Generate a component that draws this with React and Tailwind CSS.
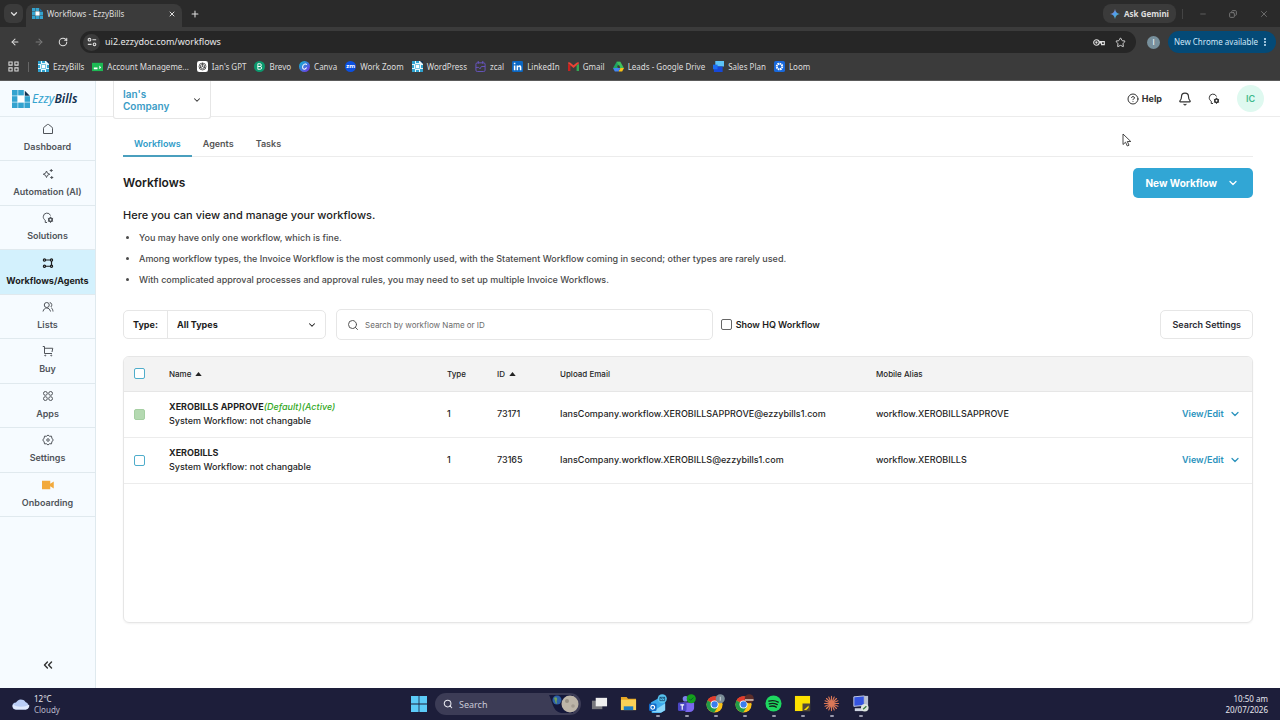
import { useState } from "react";
import {
  ArrowLeft,
  ArrowRight,
  RotateCw,
  ChevronDown,
  ChevronsLeft,
  X,
  Plus,
  Minus,
  Copy,
  Star,
  Search,
  Bell,
  CircleHelp,
  EllipsisVertical,
} from "lucide-react";

/* ---------- LOGOS ---------- */

function EzzyMark({ className, corner = "#12304f" }) {
  const cells = [];
  for (let y = 0; y < 3; y++) {
    for (let x = 0; x < 3; x++) {
      const center = x === 1 && y === 1;
      if (!center && !(x === 2 && y === 0)) cells.push([x, y]);
    }
  }
  return (
    <svg viewBox="0 0 18 18" className={className} aria-hidden="true">
      {cells.map(([x, y]) => (
        <rect key={`${x}-${y}`} x={x * 6.2} y={y * 6.2} width="5.6" height="5.6" fill="#34a3cf" />
      ))}
      <path d="M5.600 5.600h6.800v6.800H5.600z" fill="#fff" />
      <path d="M12.800 .8l5 5h-5z" fill={corner} />
    </svg>
  );
}

function ChromeMark({ badge, className }) {
  return (
    <svg viewBox="0 0 20 20" className={className} aria-hidden="true">
      <circle cx="9" cy="11" r="8.5" fill="#fbc116" />
      <path d="M9 11L1.6 6.8A8.5 8.5 0 0 1 16.4 6.8z" fill="#e33b2e" />
      <path d="M9 11L1.6 6.8A8.5 8.5 0 0 0 8.6 19.5L13 13z" fill="#229a48" />
      <circle cx="9" cy="11" r="4.2" fill="#fff" />
      <circle cx="9" cy="11" r="3.3" fill="#3b7ded" />
      {badge === "grey" && <circle cx="15" cy="5" r="4.8" fill="#7b8d98" />}
      {badge === "grey" && <path d="M15 3v4" stroke="#d5dde2" strokeWidth="1" />}
      {badge === "photo" && <circle cx="15" cy="5" r="4.8" fill="#5b2d2a" />}
      {badge === "photo" && <path d="M10.5 5.5h9v1.6h-9z" fill="#d9c9c2" />}
    </svg>
  );
}

/* ---------- SIDEBAR ICONS ---------- */

function Icon({ name, className = "size-3" }) {
  const shapes = {
    home: <path d="M3 10.500c0-1 .4-1.700 1.200-2.300L10.800 3c.8-.6 1.600-.6 2.400 0l6.600 5.200c.8.600 1.200 1.300 1.200 2.300V21H3z" />,
    sparkles: (
      <>
        <path d="M9 6l2 4.500 4.500 2-4.500 2L9 19l-2-4.500-4.500-2 4.500-2z" />
        <path d="M18.500 2v6M15.500 5h6M19.500 16v6M16.500 19h6" />
      </>
    ),
    bulb: (
      <>
        <path d="M10 21H6.500v-4.500C3.500 14.500 2.500 12 2.500 9.500a7.500 7.500 0 0 1 14.500-2.500" />
        <circle cx="17" cy="15.500" r="3.400" strokeWidth="3.200" />
        <path d="M17 9.500v2.500M17 19v2.500M11.800 12.500l2 1.200M20.200 17.300l2 1.200M11.800 18.500l2-1.200M20.200 13.700l2-1.200" />
      </>
    ),
    flow: (
      <g strokeWidth="2.400">
        <circle cx="5" cy="6" r="2.200" />
        <circle cx="19" cy="6" r="2.200" />
        <circle cx="5" cy="18.500" r="2.200" />
        <circle cx="19" cy="18.500" r="2.200" />
        <path d="M7.200 6h9.600M7.200 18.500h9.600M19 8.200v8.100" />
      </g>
    ),
    users: (
      <>
        <circle cx="9.5" cy="8" r="5" />
        <path d="M2 21c1-4.500 4-7 7.500-7s6.500 2.500 7.500 7M15.500 3a5 5 0 0 1 2 9M18.500 13.500c2 1.300 3.200 4 3.500 7.500" />
      </>
    ),
    cart: (
      <>
        <path d="M1.500 3H5v14h15M5 6.500h16.500L20 14" />
        <circle cx="6.500" cy="21" r="1" />
        <circle cx="18.500" cy="21" r="1" />
      </>
    ),
    apps: (
      <>
        <circle cx="6.800" cy="6.800" r="3.800" />
        <circle cx="17.200" cy="6.800" r="3.800" />
        <circle cx="6.800" cy="17.200" r="3.800" />
        <circle cx="17.200" cy="17.200" r="3.800" />
      </>
    ),
    gear: (
      <>
        <path d="M12 2l3 2.500 4-.2.700 3.900L22.500 12l-2.800 3.800-.7 3.900-4-.2-3 2.500-3-2.500-4 .2-.7-3.900L1.500 12l2.800-3.800.7-3.900 4 .2z" />
        <circle cx="12" cy="12" r="2.500" />
      </>
    ),
  };
  if (name === "video") {
    return (
      <svg viewBox="0 0 24 24" className={className} fill="#f2a93b" aria-hidden="true">
        <path d="M0 3.500h16.500v6L23.500 5v14l-7-4.500v6H0z" />
      </svg>
    );
  }
  return (
    <svg
      viewBox="0 0 24 24"
      className={className}
      fill="none"
      stroke="currentColor"
      strokeWidth="2"
      strokeLinejoin="round"
      aria-hidden="true"
    >
      {shapes[name]}
    </svg>
  );
}

/* ---------- BROWSER ---------- */

function TileIcon() {
  return (
    <svg viewBox="0 0 11 11" className="size-[11px]" aria-hidden="true">
      <rect width="11" height="11" fill="#e8f6fb" />
      <path d="M0 0h3v3H0zM4 0h3v2H4zM0 4h2v3H0zM0 8h3v3H0zM4 9h3v2H4zM9 4h2v3H9zM8 8h3v3H8z" fill="#2fa2cf" />
      <path d="M8 0l3 3V0z" fill="#12304f" />
      <path d="M3 3h5v5H3z" fill="#7cc8e3" />
      <path d="M4 4h3v3H4z" fill="#fff" />
    </svg>
  );
}

const bookmarkIcons = {
  tile: <TileIcon />,
  account: (
    <svg viewBox="0 0 12 12" className="size-[11px]">
      <path d="M0 2h12v9H0z" fill="#1db954" />
      <path d="M2 7h4v2H2zM8 5l2 2-2 2z" fill="#fff" />
    </svg>
  ),
  gpt: (
    <svg viewBox="0 0 12 12" className="size-[11px]">
      <rect width="12" height="12" rx="2.500" fill="#fff" />
      <g fill="none" stroke="#333" strokeWidth=".8">
        <circle cx="6" cy="6" r="3.800" />
        <path d="M6 3.500L8.200 4.800v2.500L6 8.500 3.800 7.300V4.800zM6 2v4l3.500 2M6 6L2.500 8" />
      </g>
    </svg>
  ),
  brevo: (
    <svg viewBox="0 0 12 12" className="size-[11px]">
      <circle cx="6" cy="6" r="6" fill="#0b996e" />
      <path d="M4.200 9V3h2.300a1.500 1.500 0 0 1 0 3H4.200h2.600a1.500 1.500 0 0 1 0 3z" fill="none" stroke="#fff" />
    </svg>
  ),
  canva: (
    <svg viewBox="0 0 12 12" className="size-[11px]">
      <defs>
        <linearGradient id="canva" x1="0" y1="0" x2="1" y2="1">
          <stop offset="0" stopColor="#08bfd0" />
          <stop offset="1" stopColor="#7a2be8" />
        </linearGradient>
      </defs>
      <circle cx="6" cy="6" r="6" fill="url(#canva)" />
      <path d="M8.300 4.200C7.900 2.500 4 3 3.900 6.600c0 3 3 3 4.400.6" fill="none" stroke="#fff" strokeWidth="1.100" />
    </svg>
  ),
  zoom: (
    <span className="flex size-[11px] items-center justify-center rounded-full bg-[#0b4fe0] text-[6px] font-bold text-white">
      zm
    </span>
  ),
  zcal: (
    <svg viewBox="0 0 12 12" className="size-[11px]" fill="none" stroke="#6a56c8" strokeWidth="1">
      <rect x="1" y="2" width="10" height="9.500" rx="1.500" />
      <path d="M3.500 0v3M8.500 0v3M1 7h3l1.500 1.500L7 6h4" />
    </svg>
  ),
  linkedin: (
    <svg viewBox="0 0 12 12" className="size-[11px]">
      <rect width="12" height="12" rx="1.500" fill="#0a66c2" />
      <path d="M2 4.800h1.700V10H2zM2 2h1.700v1.600H2zM5 4.800h1.600v.7c.9-1.300 3.600-1.200 3.600 1.400V10H8.500V7.300c0-1.500-1.800-1.400-1.800 0V10H5z" fill="#fff" />
    </svg>
  ),
  gmail: (
    <svg viewBox="0 0 12 12" className="size-[11px]">
      <path d="M0 3v8h2.600V4.500z" fill="#c5221f" />
      <path d="M12 3v8H9.400V4.500z" fill="#34a853" />
      <path d="M0 2.500C0 1 1.500 1 2.600 1.800L6 4.600l3.400-2.800C10.500 1 12 1 12 2.500L6 7.600z" fill="#ea4335" />
    </svg>
  ),
  drive: (
    <svg viewBox="0 0 12 12" className="size-[11px]">
      <path d="M4 .8h4L4.200 11 0 8z" fill="#1fa463" />
      <path d="M8 .8L12 8H8L4 .8z" fill="#3fbf5c" />
      <path d="M8 7.500h4L10 11.500H6z" fill="#fbc116" />
      <path d="M2.500 7.500H8l-2 4H2L0 8z" fill="#4285f4" />
      <circle cx="6" cy="6" r="1.300" fill="#3b3b3b" />
    </svg>
  ),
  sales: (
    <svg viewBox="0 0 12 12" className="size-[11px]">
      <path d="M2.500 0H12v6H2.500z" fill="#5cc3f7" />
      <path d="M1 6h9.500v6H1z" fill="#1648d8" />
      <path d="M0 4h5v5H0z" fill="#1b6cf0" />
    </svg>
  ),
  loom: (
    <svg viewBox="0 0 12 12" className="size-[11px]">
      <rect width="12" height="12" rx="2" fill="#1868db" />
      <circle cx="6" cy="6" r="3" fill="none" stroke="#fff" strokeWidth="2.200" strokeDasharray="1.700 .6" />
    </svg>
  ),
};

const bookmarks = [
  { label: "EzzyBills", icon: "tile" },
  { label: "Account Manageme...", icon: "account" },
  { label: "Ian's GPT", icon: "gpt" },
  { label: "Brevo", icon: "brevo" },
  { label: "Canva", icon: "canva" },
  { label: "Work Zoom", icon: "zoom" },
  { label: "WordPress", icon: "tile" },
  { label: "zcal", icon: "zcal" },
  { label: "LinkedIn", icon: "linkedin" },
  { label: "Gmail", icon: "gmail" },
  { label: "Leads - Google Drive", icon: "drive" },
  { label: "Sales Plan", icon: "sales" },
  { label: "Loom", icon: "loom" },
];

function Browser() {
  return (
    <div className="bg-[#3b3b3b] font-['Noto_Sans',sans-serif] text-[8px] text-[#dedede]">
      {/* TITLE BAR */}
      <div className="flex h-[27px] items-center bg-[#2a2a2a] pl-1">
        <button aria-label="Search tabs" className="flex size-[19px] items-center justify-center rounded-md bg-[#3b3b3b]">
          <ChevronDown className="size-2.5" strokeWidth={3} />
        </button>
        <div className="ml-[3px] flex h-[23px] w-[156px] items-center self-end rounded-t-lg bg-[#3b3b3b] px-1.5 pb-1">
          <EzzyMark className="size-[11px]" corner="#1d6fa5" />
          <span className="ml-1 flex-1">Workflows - EzzyBills</span>
          <button aria-label="Close tab">
            <X className="size-2" strokeWidth={3} />
          </button>
        </div>
        <button aria-label="New tab" className="ml-2">
          <Plus className="size-2.5" strokeWidth={2.5} />
        </button>
        <div className="ml-auto flex items-center">
          <button className="flex h-[19px] items-center gap-1 rounded-lg bg-[#3b3b3b] px-[7px] text-[8px] font-bold">
            <svg viewBox="0 0 24 24" className="size-2.5" aria-hidden="true">
              <defs>
                <linearGradient id="gemini" x1="0" y1="0" x2="1" y2="1">
                  <stop offset="0" stopColor="#e9705a" />
                  <stop offset=".45" stopColor="#4f9bf5" />
                  <stop offset="1" stopColor="#59c58b" />
                </linearGradient>
              </defs>
              <path d="M12 0c1.500 7.500 4.500 10.500 12 12-7.500 1.500-10.500 4.500-12 12-1.500-7.500-4.500-10.500-12-12C7.500 10.500 10.500 7.500 12 0z" fill="url(#gemini)" />
            </svg>
            Ask Gemini
          </button>
          <span className="ml-1.5 h-2.5 w-px bg-[#444]" />
          <div className="flex items-center gap-[22px] pr-[11px] pl-4 text-[#777]">
            <button aria-label="Minimize"><Minus className="size-2" /></button>
            <button aria-label="Restore"><Copy className="size-2 -scale-x-100" strokeWidth={3} /></button>
            <button aria-label="Close"><X className="size-2.5" /></button>
          </div>
        </div>
      </div>

      {/* ADDRESS BAR */}
      <div className="flex h-[30px] items-center pr-1 pl-2.5">
        <div className="flex items-center gap-3.5">
          <button aria-label="Back"><ArrowLeft className="size-2.5" strokeWidth={2.5} /></button>
          <button aria-label="Forward" className="text-[#7a7a7a]"><ArrowRight className="size-2.5" strokeWidth={2.5} /></button>
          <button aria-label="Reload"><RotateCw className="size-2.5" strokeWidth={2.5} /></button>
        </div>
        <div className="ml-3 flex h-[22px] flex-1 items-center rounded-full bg-[#262626] pr-2.5 pl-[3px]">
          <button aria-label="Site information" className="flex size-[17px] shrink-0 items-center justify-center rounded-full bg-[#3b3b3b]">
            <svg viewBox="0 0 12 12" className="size-2.5" fill="none" stroke="currentColor" strokeWidth="1.300" aria-hidden="true">
              <circle cx="3" cy="3.200" r="1.600" />
              <circle cx="9" cy="8.800" r="1.600" />
              <path d="M6.500 3.200H11M1 8.800h4.500" />
            </svg>
          </button>
          <input
            aria-label="Address"
            defaultValue="ui2.ezzydoc.com/workflows"
            className="ml-[5px] flex-1 bg-transparent text-[9px] text-[#e8e8e8] outline-none"
          />
          <button aria-label="Passwords">
            <svg viewBox="0 0 14 10" className="h-[9px] w-3" fill="none" stroke="currentColor" strokeWidth="1.300" aria-hidden="true">
              <circle cx="4" cy="5" r="3.200" />
              <circle cx="4" cy="5" r=".7" />
              <path d="M7.200 4h6v3.500H10V5.500H7.200" />
            </svg>
          </button>
          <button aria-label="Bookmark" className="ml-2.5"><Star className="size-[11px]" /></button>
        </div>
        <button aria-label="Profile" className="ml-[11px] flex size-[13px] items-center justify-center rounded-full bg-[#78909c] font-['Inter',sans-serif] text-white">
          I
        </button>
        <button className="ml-2 flex h-[22px] items-center gap-0.5 rounded-full bg-[#044a77] px-1.5 text-[#cfe8fa]">
          New Chrome available
          <EllipsisVertical className="size-2.5" strokeWidth={3} />
        </button>
      </div>

      {/* BOOKMARKS */}
      <div className="flex h-6 items-center border-b border-[#5a5a5a] pb-1 pl-2">
        <button aria-label="Apps">
          <svg viewBox="0 0 12 12" className="size-[11px]" fill="none" stroke="currentColor" strokeWidth="1.100" aria-hidden="true">
            <path d="M1 1h3.500v3.500H1zM7.500 1H11v3.500H7.500zM1 7.500h3.500V11H1zM7.500 7.500H11V11H7.500z" />
          </svg>
        </button>
        <span className="mr-[9px] ml-[9px] h-2.5 w-px bg-[#666]" />
        <nav className="flex items-center gap-2">
          {bookmarks.map((b) => (
            <a key={b.label} href="#" className="flex items-center gap-1 whitespace-nowrap">
              {bookmarkIcons[b.icon]}
              {b.label}
            </a>
          ))}
        </nav>
      </div>
    </div>
  );
}

/* ---------- SIDEBAR ---------- */

const menu = [
  { label: "Dashboard", icon: "home" },
  { label: "Automation (AI)", icon: "sparkles" },
  { label: "Solutions", icon: "bulb" },
  { label: "Workflows/Agents", icon: "flow", active: true },
  { label: "Lists", icon: "users" },
  { label: "Buy", icon: "cart" },
  { label: "Apps", icon: "apps" },
  { label: "Settings", icon: "gear" },
  { label: "Onboarding", icon: "video" },
];

function Sidebar() {
  return (
    <aside className="flex w-24 shrink-0 flex-col border-r border-[#dfe9ee] bg-[#f6fbff]">
      <a href="#" className="flex h-9 items-center border-b border-[#e3ebf0] pl-3">
        <EzzyMark className="size-[18px]" />
        <span className="ml-0.5 font-['Noto_Sans',sans-serif] text-[12px] text-[#34a3cf] italic">
          Ezzy<span className="font-semibold text-[#12304f]">Bills</span>
        </span>
      </a>
      <nav className="grid h-[400px] auto-rows-fr">
        {menu.map((m) => (
          <a
            key={m.label}
            href="#"
            className={`flex flex-col items-center justify-center gap-1 border-b border-[#e0e9ee] text-[9px] leading-[15px] whitespace-nowrap ${
              m.active ? "bg-[#d3f1fd] font-bold text-[#1c1c1c]" : "font-semibold text-[#50545a]"
            }`}
          >
            <Icon name={m.icon} />
            {m.label}
          </a>
        ))}
      </nav>
      <button aria-label="Collapse menu" className="mt-auto mb-4 self-center text-[#333]">
        <ChevronsLeft className="size-3.5" strokeWidth={2.5} />
      </button>
    </aside>
  );
}

/* ---------- WORKFLOWS ---------- */

const workflows = [
  {
    name: "XEROBILLS APPROVE",
    flags: "(Default)(Active)",
    type: 1,
    id: 73171,
    email: "IansCompany.workflow.XEROBILLSAPPROVE@ezzybills1.com",
    alias: "workflow.XEROBILLSAPPROVE",
    locked: true,
  },
  {
    name: "XEROBILLS",
    type: 1,
    id: 73165,
    email: "IansCompany.workflow.XEROBILLS@ezzybills1.com",
    alias: "workflow.XEROBILLS",
  },
];

function SortArrow() {
  return (
    <svg viewBox="0 0 8 5" className="h-1 w-[7px]" aria-hidden="true">
      <path d="M4 0l4 5H0z" fill="#222" />
    </svg>
  );
}

function WorkflowTable() {
  const box = "block size-[11px] appearance-none rounded-xs border";
  return (
    <div className="mt-4 mb-[65px] flex-1 overflow-hidden rounded-md border border-[#e6e6e6] shadow-xs">
      <table className="w-full table-fixed text-left text-[9px] font-medium text-[#1f1f1f]">
        <colgroup>
          <col className="w-[45px]" />
          <col className="w-[278px]" />
          <col className="w-[50px]" />
          <col className="w-[63px]" />
          <col className="w-[316px]" />
          <col />
          <col className="w-[70px]" />
        </colgroup>
        <thead>
          <tr className="h-[34px] border-b border-[#e6e6e6] bg-[#f3f3f3] text-[8px]">
            <th className="pl-2.5">
              <input type="checkbox" aria-label="Select all" className={`${box} border-[#4fadcb] bg-white`} />
            </th>
            <th className="font-medium">
              <span className="flex items-center gap-1">Name <SortArrow /></span>
            </th>
            <th className="font-medium">Type</th>
            <th className="font-medium">
              <span className="flex items-center gap-1">ID <SortArrow /></span>
            </th>
            <th className="font-medium">Upload Email</th>
            <th className="font-medium">Mobile Alias</th>
            <th aria-label="Actions" />
          </tr>
        </thead>
        <tbody>
          {workflows.map((w) => (
            <tr key={w.id} className="h-[46px] border-b border-[#ececec]">
              <td className="pl-2.5">
                <input
                  type="checkbox"
                  aria-label={`Select ${w.name}`}
                  disabled={w.locked}
                  className={`${box} ${w.locked ? "border-[#a5cfa2] bg-[#b4d9b1]" : "border-[#4fadcb] bg-white"}`}
                />
              </td>
              <td className="leading-[14px]">
                <div>
                  <span className="font-bold">{w.name}</span>
                  {w.flags && <em className="text-[#32a81e]">{w.flags}</em>}
                </div>
                <div>System Workflow: not changable</div>
              </td>
              <td>{w.type}</td>
              <td>{w.id}</td>
              <td>{w.email}</td>
              <td>{w.alias}</td>
              <td>
                <button className="flex items-center gap-[5px] font-semibold text-[#2b93bd]">
                  View/Edit
                  <ChevronDown className="size-3" strokeWidth={2.5} />
                </button>
              </td>
            </tr>
          ))}
        </tbody>
      </table>
    </div>
  );
}

function Workflows() {
  const [tab, setTab] = useState("Workflows");
  const [query, setQuery] = useState("");

  return (
    <main className="flex flex-1 flex-col px-[27px]">
      {/* TABS */}
      <div className="mt-3.5 flex border-b border-[#ececec]">
        {["Workflows", "Agents", "Tasks"].map((t) => (
          <button
            key={t}
            onClick={() => setTab(t)}
            className={`-mb-px h-[26px] border-b-2 px-[11px] pt-0.5 text-[9px] font-semibold ${
              tab === t ? "border-[#4a9fbe] text-[#2f9bc8]" : "border-transparent text-[#555]"
            }`}
          >
            {t}
          </button>
        ))}
      </div>

      {/* TITLE */}
      <div className="mt-[11px] flex items-center justify-between">
        <h1 className="text-[12px] font-semibold">Workflows</h1>
        <button className="flex h-[30px] items-center gap-2 rounded-[5px] bg-[#31a6d5] px-3 text-[10px] font-bold text-white">
          New Workflow
          <ChevronDown className="mx-0.5 size-3" strokeWidth={2.5} />
        </button>
      </div>

      <h2 className="mt-[9px] text-[11px] leading-4 font-medium">Here you can view and manage your workflows.</h2>
      <ul className="mt-1 list-disc pl-4 text-[9px] leading-[21px] font-medium text-[#4a4a4a]">
        <li>You may have only one workflow, which is fine.</li>
        <li>
          Among workflow types, the Invoice Workflow is the most commonly used, with the Statement Workflow coming in
          second; other types are rarely used.
        </li>
        <li>
          With complicated approval processes and approval rules, you may need to set up multiple Invoice Workflows.
        </li>
      </ul>

      {/* FILTERS */}
      <div className="mt-[19px] flex items-center text-[9px]">
        <div className="flex h-[29px] w-[203px] items-center rounded-[5px] border border-[#e6e6e6]">
          <label htmlFor="type" className="flex h-full w-11 items-center border-r border-[#e6e6e6] pl-[9px] font-bold">
            Type:
          </label>
          <div className="relative flex-1">
            <select id="type" className="w-full appearance-none bg-transparent pl-[9px] font-bold outline-none">
              <option>All Types</option>
            </select>
            <ChevronDown className="pointer-events-none absolute top-0.5 right-2 size-2.5" strokeWidth={2.5} />
          </div>
        </div>
        <div className="ml-2.5 flex h-[31px] w-1/3 items-center rounded-[5px] border border-[#e6e6e6] px-2.5">
          <Search className="size-3 text-[#555]" />
          <input
            aria-label="Search workflows"
            value={query}
            onChange={(e) => setQuery(e.target.value)}
            placeholder="Search by workflow Name or ID"
            className="ml-1.5 flex-1 text-[8px] outline-none placeholder:text-[#6b6b6b]"
          />
        </div>
        <label className="ml-2 flex items-center gap-1 font-semibold">
          <input type="checkbox" className="size-[11px] appearance-none rounded-xs border border-[#666]" />
          Show HQ Workflow
        </label>
        <button className="ml-auto h-[29px] rounded-[5px] border border-[#e6e6e6] px-[11px] font-semibold text-[#2c2c34]">
          Search Settings
        </button>
      </div>

      <WorkflowTable />
    </main>
  );
}

function Header() {
  return (
    <header className="flex h-9 items-center border-b border-[#ececec] pr-4 pl-[17px]">
      <button className="flex h-[38px] w-[98px] items-center justify-between self-start rounded-b-[3px] border border-t-0 border-[#e6e6e6] bg-white px-2 text-left text-[10px] leading-3 font-semibold text-[#3a9cc6]">
        <span className="w-14 pl-px">Ian's Company</span>
        <ChevronDown className="size-2.5 text-[#333]" strokeWidth={2.5} />
      </button>
      <div className="ml-auto flex items-center text-[#333]">
        <a href="#" className="flex items-center gap-[3px] text-[9px] font-bold">
          <CircleHelp className="size-3" />
          Help
        </a>
        <button aria-label="Notifications" className="ml-4"><Bell className="size-3.5" /></button>
        <button aria-label="Solutions" className="ml-4 flex"><Icon name="bulb" /></button>
        <button className="ml-[17px] size-[27px] rounded-full bg-[#dff9f0] text-[9px] font-semibold text-[#3fba8c]">IC</button>
      </div>
    </header>
  );
}

/* ---------- TASKBAR ---------- */

const taskIcons = [
  <svg key="desk" viewBox="0 0 18 18" className="size-[17px]">
    <path d="M1 6h11v9H1z" fill="#77777d" />
    <path d="M5 3h12v9H5z" fill="#eee" />
  </svg>,
  <svg key="files" viewBox="0 0 18 18" className="size-[17px]">
    <path d="M1 2h6l1.500 2H17v12H1z" fill="#e8a825" />
    <path d="M1 5h16v11H1z" fill="#fbd257" />
    <path d="M4 12h10v4H4z" fill="#1f7fc4" />
  </svg>,
  <svg key="mail" viewBox="0 0 20 20" className="size-[19px]">
    <path d="M3 9l9-5 6 4v9l-5 3H4z" fill="#3ba8ec" />
    <path d="M4 19l14-9v7l-4 2.500z" fill="#8ad6fb" />
    <rect x="1" y="10" width="8" height="8" rx="1.500" fill="#1269c7" />
    <circle cx="5" cy="14" r="2" fill="none" stroke="#fff" strokeWidth="1.200" />
    <circle cx="15" cy="5" r="4.800" fill="#57c3ef" />
    <path d="M12.500 3.500h5v3.500h-5zl2.500 2 2.500-2" fill="none" stroke="#123f66" strokeWidth=".8" />
  </svg>,
  <svg key="teams" viewBox="0 0 20 20" className="size-[19px]">
    <circle cx="9" cy="5" r="3" fill="#7b83eb" />
    <path d="M6 9h12v6a5 5 0 0 1-5 4H9z" fill="#7b67ee" />
    <rect x="1" y="9" width="9" height="9" rx="1.500" fill="#4b46c4" />
    <path d="M3.500 11.500h4M5.500 11.500v5" stroke="#fff" strokeWidth="1.200" />
    <circle cx="15" cy="5" r="4.800" fill="#14a01c" />
    <path d="M12.800 5l1.600 1.600L17.300 3.800" fill="none" stroke="#063" strokeWidth="1" />
  </svg>,
  <ChromeMark key="chrome1" badge="grey" className="size-[19px]" />,
  <ChromeMark key="chrome2" badge="photo" className="size-[19px]" />,
  <svg key="spotify" viewBox="0 0 18 18" className="size-[17px]">
    <circle cx="9" cy="9" r="8.500" fill="#1ed760" />
    <path d="M4 6.500c3.500-1 7-.7 10 1M4.500 9.300c3-.8 6-.5 8.500.9M5 12c2.500-.6 5-.4 7 .8" fill="none" stroke="#12231a" strokeWidth="1.400" strokeLinecap="round" />
  </svg>,
  <svg key="notes" viewBox="0 0 18 18" className="size-[17px]">
    <path d="M1 1h16v16H1z" fill="#fde100" />
    <path d="M9 9h8v8H9z" fill="#54493a" />
    <path d="M10.500 16l5-5v2.500L13 16z" fill="#fde100" />
  </svg>,
  <svg key="claude" viewBox="0 0 18 18" className="size-[17px]" stroke="#d97757" strokeWidth="1.200" strokeLinecap="round">
    <path d="M9 1.500v15M1.500 9h15M3.700 3.700l10.600 10.600M14.300 3.700L3.700 14.300M6.100 2.200l5.800 13.600M11.900 2.200L6.100 15.800M2.200 6.100l13.600 5.800M2.200 11.900l13.600-5.800" />
  </svg>,
  <svg key="remote" viewBox="0 0 20 20" className="size-[19px]">
    <path d="M3 3l11-1v10L3 13z" fill="#3554e0" stroke="#c7cfe8" />
    <path d="M14 2h4v13h-4z" fill="#b9c0d0" />
    <path d="M4 15h9v3H4z" fill="#cfd5e2" />
    <circle cx="14.500" cy="14.500" r="4" fill="#dfe6df" />
    <path d="M12.800 16l3.400-3" stroke="#3c7a3c" strokeWidth="1.400" />
  </svg>,
];

function Taskbar() {
  return (
    <footer className="flex h-8 items-center bg-[#1d1e3a] px-3 font-['Noto_Sans',sans-serif] text-[8px] leading-[11px] text-[#e6e6ee]">
      <button className="flex flex-1 items-center gap-1 text-left">
        <svg viewBox="0 0 18 12" className="h-3 w-[18px]" aria-hidden="true">
          <path d="M4 11.500a3.500 3.500 0 0 1 0-7A5.500 5.500 0 0 1 13.500 4 4 4 0 0 1 14 11.500z" fill="#b9cdf6" />
          <path d="M4 11.500a3.500 3.500 0 0 1-3-5c4 3 12 3 16 0a3.700 3.700 0 0 1-3 5z" fill="#dfe9fd" />
        </svg>
        <span>
          12°C
          <br />
          <span className="text-[#b8b9c9]">Cloudy</span>
        </span>
      </button>
      <div className="flex items-center pl-1.5">
        <button aria-label="Start">
          <svg viewBox="0 0 16 16" className="size-4" fill="#5ccbf8">
            <path d="M0 0h7.600v7.600H0zM8.400 0H16v7.600H8.400zM0 8.400h7.600V16H0zM8.400 8.400H16V16H8.400z" />
          </svg>
        </button>
        <div className="ml-2 flex h-[22px] w-[146px] items-center overflow-hidden rounded-full bg-[#3c3c56] pl-2">
          <Search className="size-2.5 shrink-0" strokeWidth={2.5} />
          <input
            aria-label="Search"
            placeholder="Search"
            className="ml-1.5 w-0 flex-1 bg-transparent text-[9px] outline-none placeholder:text-[#c9c9d6]"
          />
          <svg viewBox="0 0 34 22" className="h-[22px] w-[34px] shrink-0" aria-hidden="true">
            <path d="M2 2h24v18H16C6 20 6 10 2 2z" fill="#14173a" />
            <circle cx="10" cy="7" r="4.500" fill="#2d5fa8" />
            <path d="M7 5c2-2 4 0 3 2s1 3-1 4" fill="#6fa05a" />
            <circle cx="16" cy="12" r="1" fill="#cfd3e6" />
            <circle cx="23" cy="11" r="8.500" fill="#bdb5a8" />
            <circle cx="20" cy="8" r="2" fill="#978f84" />
            <circle cx="26" cy="13" r="1.800" fill="#a39b90" />
          </svg>
        </div>
        <div className="ml-1 flex">
          {taskIcons.map((icon, i) => (
            <button key={icon.key} aria-label={icon.key} className="flex h-8 w-[29px] flex-col items-center justify-end gap-0.5 pb-[3px]">
              <span className="flex h-5 items-center">{icon}</span>
              <span className={`h-0.5 w-1 rounded-full ${i > 1 ? "bg-[#9a9aad]" : "bg-transparent"}`} />
            </button>
          ))}
        </div>
      </div>
      <div className="flex-1 text-right">
        10:50 am
        <br />
        20/07/2026
      </div>
    </footer>
  );
}

export default function App() {
  return (
    <div className="relative flex min-h-screen flex-col bg-white font-['Inter',sans-serif] text-[#1c1c1c]">
      <Browser />
      <div className="flex flex-1">
        <Sidebar />
        <div className="flex flex-1 flex-col">
          <Header />
          <Workflows />
        </div>
      </div>
      <Taskbar />

      {/* MOUSE POINTER */}
      <svg viewBox="0 0 10 14" className="pointer-events-none absolute top-[133px] left-[1122px] h-3.5 w-2.5" aria-hidden="true">
        <path d="M1 1v10.500l2.500-2.300L5.300 13l1.700-.8-1.700-3.700h3.500z" fill="#fff" stroke="#333" strokeWidth=".9" />
      </svg>
    </div>
  );
}
